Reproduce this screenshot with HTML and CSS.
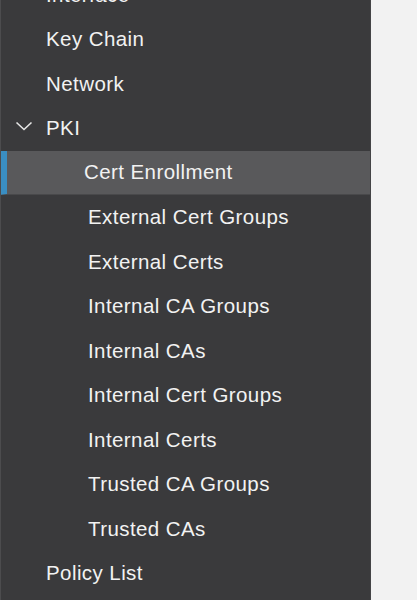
FILE: index.html
```html
<!DOCTYPE html>
<html>
<head>
<meta charset="utf-8">
<link rel="stylesheet" href="styles.css">
</head>
<body>
<div class="layout">
  <nav class="sidebar">
    <ul class="menu">
      <li class="item">Interface</li>
      <li class="item">Key Chain</li>
      <li class="item">Network</li>
      <li class="item group">
        <svg class="chev" width="18" height="10" viewBox="0 0 18 10"><path d="M1.5 1.5 L9 8.5 L16.5 1.5" fill="none" stroke="#e6e6e6" stroke-width="1.6"/></svg>
        <span>PKI</span>
      </li>
      <li class="item child selected">Cert Enrollment</li>
      <li class="item child">External Cert Groups</li>
      <li class="item child">External Certs</li>
      <li class="item child">Internal CA Groups</li>
      <li class="item child">Internal CAs</li>
      <li class="item child">Internal Cert Groups</li>
      <li class="item child">Internal Certs</li>
      <li class="item child">Trusted CA Groups</li>
      <li class="item child">Trusted CAs</li>
      <li class="item">Policy List</li>
    </ul>
  </nav>
  <main class="content"></main>
</div>
</body>
</html>
```

FILE: styles.css
```css
html, body {
  margin: 0;
  padding: 0;
  height: 100%;
  overflow: hidden;
  background: #f2f2f2;
}
.layout {
  display: flex;
  height: 600px;
}
.sidebar {
  width: 369px;
  flex: none;
  background: #3a3a3c;
  border-left: 1px solid #4c4c4e;
  border-right: 1px solid #444446;
  overflow: hidden;
}
.menu {
  list-style: none;
  margin: -27.5px 0 0 0;
  padding: 0;
}
.item {
  height: 44.5px;
  display: flex;
  align-items: center;
  padding-left: 45px;
  box-sizing: border-box;
  font-family: "Liberation Sans", Arial, sans-serif;
  font-size: 20.5px;
  letter-spacing: 0.42px;
  color: #f2f2f2;
}
.group {
  padding-left: 14px;
}
.chev {
  margin-right: 13px;
  margin-top: -4px;
}
.child {
  padding-left: 87px;
}
.selected {
  background: #59595b;
  border-left: 7px solid #3a8ec2;
  padding-left: 77px;
  margin-left: -1px;
  border-bottom: 1px solid #49494b;
}
.content {
  flex: 1;
  background: #f2f2f2;
}
```
